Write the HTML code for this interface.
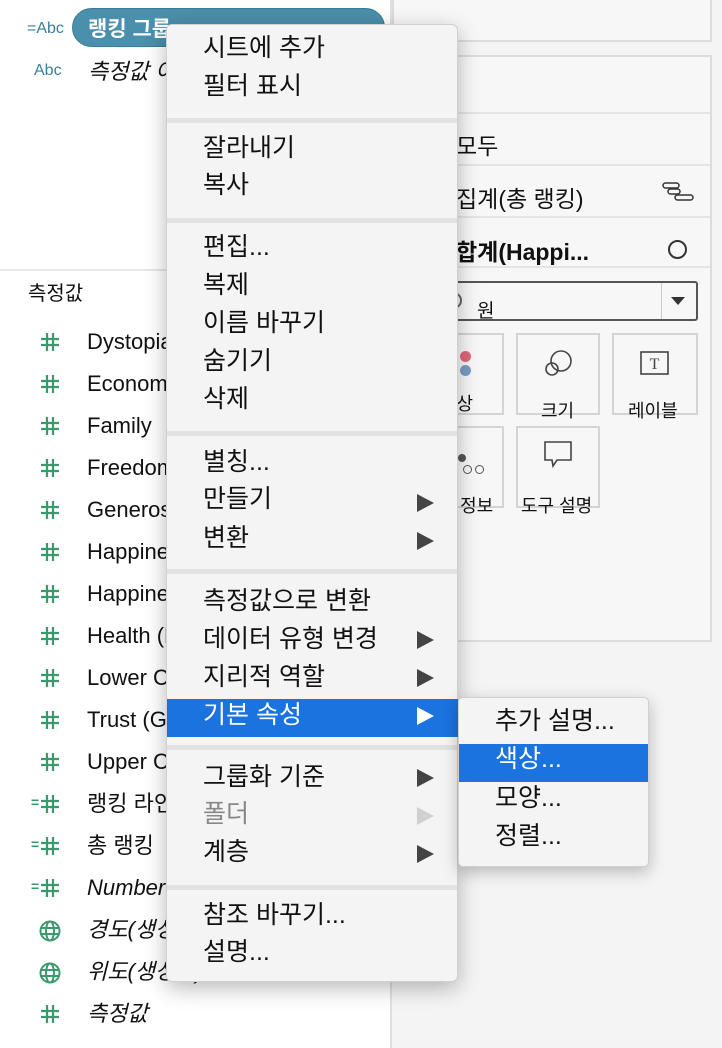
<!DOCTYPE html>
<html><head><meta charset="utf-8"><style>
*{margin:0;padding:0;box-sizing:border-box}
body{width:722px;height:1048px;position:relative;overflow:hidden;background:#fff;font-family:"Liberation Sans","Noto Sans CJK KR",sans-serif;color:#111}
.a{position:absolute;white-space:nowrap}
.li{font-size:22px;line-height:26px}
.it{font-style:italic}
.mi{position:absolute;left:36px;font-size:25px;line-height:28px}
.sep{position:absolute;left:0;right:0;height:5px;background:#e2e2e2}
.arr{position:absolute;left:250px;width:0;height:0;border-top:9px solid transparent;border-bottom:9px solid transparent;border-left:17px solid #444}
.btn{position:absolute;border:2px solid #d4d4d4;background:#f7f7f7;font-size:18px;text-align:center}
.rl{position:absolute;left:394px;width:316px;height:2px;background:#e4e4e4}
.h{position:absolute;width:20px;height:20px}
.eq{position:absolute;font-size:14px;color:#3a9a6e;font-weight:bold}
</style></head><body>
<svg width="0" height="0" style="position:absolute"><defs><symbol id="hs" viewBox="0 0 20 20"><path d="M7 1v18M13 1v18M1 7h18M1 13h18" stroke="#3a9a6e" stroke-width="2.2" fill="none"/></symbol></defs></svg>
<!-- left -->
<div class="a" style="left:27px;top:20px;font-size:16px;color:#3a7f9a">=Abc</div>
<div class="a" style="left:72px;top:8px;width:313px;height:39px;border-radius:20px;background:#4a8fab;border:1px solid #3a7b96"></div>
<div class="a" style="left:88px;top:13px;font-size:21px;color:#fff;font-weight:bold">랭킹 그룹</div>
<div class="a" style="left:34px;top:62px;font-size:16px;color:#3a7f9a">Abc</div>
<div class="a li it" style="left:88px;top:59px">측정값 이름</div>
<div class="a" style="left:0;top:269px;width:390px;height:2px;background:#e6e6e6"></div>
<div class="a li" style="left:28px;top:281px;font-size:20px">측정값</div>
<div class="a" style="left:390px;top:0;width:2px;height:1048px;background:#e0e0e0"></div>
<div class="a" style="left:392px;top:0;width:330px;height:1048px;background:#f4f4f4"></div>

<svg class="h" style="left:40px;top:332px"><use href="#hs"/></svg><div class="a li" style="left:87px;top:329px">Dystopia Residual</div>
<svg class="h" style="left:40px;top:374px"><use href="#hs"/></svg><div class="a li" style="left:87px;top:371px">Economy (GDP per Capi...</div>
<svg class="h" style="left:40px;top:416px"><use href="#hs"/></svg><div class="a li" style="left:87px;top:413px">Family</div>
<svg class="h" style="left:40px;top:458px"><use href="#hs"/></svg><div class="a li" style="left:87px;top:455px">Freedom</div>
<svg class="h" style="left:40px;top:500px"><use href="#hs"/></svg><div class="a li" style="left:87px;top:497px">Generosity</div>
<svg class="h" style="left:40px;top:542px"><use href="#hs"/></svg><div class="a li" style="left:87px;top:539px">Happiness Rank</div>
<svg class="h" style="left:40px;top:584px"><use href="#hs"/></svg><div class="a li" style="left:87px;top:581px">Happiness Score</div>
<svg class="h" style="left:40px;top:626px"><use href="#hs"/></svg><div class="a li" style="left:87px;top:623px">Health (Life Expectancy)</div>
<svg class="h" style="left:40px;top:668px"><use href="#hs"/></svg><div class="a li" style="left:87px;top:665px">Lower Confidence Interval</div>
<svg class="h" style="left:40px;top:710px"><use href="#hs"/></svg><div class="a li" style="left:87px;top:707px">Trust (Government Corr...</div>
<svg class="h" style="left:40px;top:752px"><use href="#hs"/></svg><div class="a li" style="left:87px;top:749px">Upper Confidence Interval</div>
<div class="eq" style="left:31px;top:794px">=</div><svg class="h" style="left:40px;top:794px"><use href="#hs"/></svg><div class="a li" style="left:87px;top:791px">랭킹 라인</div>
<div class="eq" style="left:31px;top:836px">=</div><svg class="h" style="left:40px;top:836px"><use href="#hs"/></svg><div class="a li" style="left:87px;top:833px">총 랭킹</div>
<div class="eq" style="left:31px;top:878px">=</div><svg class="h" style="left:40px;top:878px"><use href="#hs"/></svg><div class="a li it" style="left:87px;top:875px">Number of Records</div>
<svg class="a" style="left:39px;top:920px" width="22" height="22" viewBox="0 0 22 22" fill="none" stroke="#3a9a6e" stroke-width="2"><circle cx="11" cy="11" r="9.5"/><ellipse cx="11" cy="11" rx="4" ry="9.5"/><path d="M1.5 8h19M1.5 14h19"/></svg>
<div class="a li it" style="left:87px;top:917px">경도(생성됨)</div>
<svg class="a" style="left:39px;top:962px" width="22" height="22" viewBox="0 0 22 22" fill="none" stroke="#3a9a6e" stroke-width="2"><circle cx="11" cy="11" r="9.5"/><ellipse cx="11" cy="11" rx="4" ry="9.5"/><path d="M1.5 8h19M1.5 14h19"/></svg>
<div class="a li it" style="left:87px;top:959px">위도(생성됨)</div>
<svg class="h" style="left:40px;top:1004px"><use href="#hs"/></svg><div class="a li it" style="left:87px;top:1001px">측정값</div>

<!-- right panel -->
<div class="a" style="left:392px;top:-2px;width:320px;height:44px;border:2px solid #dcdcdc;background:#f7f7f7"></div>
<div class="a" style="left:392px;top:55px;width:320px;height:587px;border:2px solid #dcdcdc;background:#f7f7f7"></div>
<div class="rl" style="top:112px"></div>
<div class="rl" style="top:164px"></div>
<div class="rl" style="top:216px"></div>
<div class="rl" style="top:266px"></div>
<div class="a" style="left:456px;top:127px;font-size:23px">모두</div>
<div class="a" style="left:456px;top:180px;font-size:23px">집계(총 랭킹)</div>
<svg class="a" style="left:662px;top:182px" width="34" height="20"><rect x="1" y="1" width="16" height="5" rx="2.5" fill="none" stroke="#333" stroke-width="1.5"/><rect x="6" y="7" width="12" height="5" rx="2.5" fill="none" stroke="#333" stroke-width="1.5"/><rect x="13" y="13" width="18" height="5" rx="2.5" fill="none" stroke="#333" stroke-width="1.5"/></svg>
<div class="a" style="left:456px;top:233px;font-size:23px;font-weight:bold">합계(Happi...</div>
<div class="a" style="left:668px;top:240px;width:19px;height:19px;border:2px solid #333;border-radius:50%"></div>
<div class="a" style="left:418px;top:281px;width:280px;height:40px;border:2px solid #555;border-radius:3px;background:#f7f7f7"></div>
<div class="a" style="left:661px;top:283px;width:1px;height:36px;background:#ccc"></div>
<div class="a" style="left:671px;top:297px;border-left:7px solid transparent;border-right:7px solid transparent;border-top:8px solid #333"></div>
<div class="a" style="left:445px;top:292px;width:17px;height:17px;border:2px solid #666;border-radius:50%"></div>
<div class="a" style="left:477px;top:296px;font-size:19px">원</div>
<div class="btn" style="left:418px;top:333px;width:86px;height:82px"><span class="a" style="left:20px;top:55px">색상</span><span class="a" style="left:40px;top:16px;width:11px;height:11px;border-radius:50%;background:#e06777"></span><span class="a" style="left:40px;top:30px;width:11px;height:11px;border-radius:50%;background:#7a9cc2"></span></div>
<div class="btn" style="left:516px;top:333px;width:84px;height:82px"><svg class="a" style="left:25px;top:14px" width="32" height="28" fill="none" stroke="#444" stroke-width="1.6"><circle cx="18" cy="12" r="10"/><circle cx="9" cy="20" r="6"/></svg><span class="a" style="left:23px;top:64px;top:62px">크기</span></div>
<div class="btn" style="left:612px;top:333px;width:86px;height:82px"><svg class="a" style="left:26px;top:16px" width="30" height="26"><rect x="1" y="1" width="27" height="22" fill="none" stroke="#444" stroke-width="1.6"/><text x="14.5" y="18" font-family="Liberation Serif,serif" font-size="16" text-anchor="middle" fill="#444">T</text></svg><span class="a" style="left:14px;top:62px">레이블</span></div>
<div class="btn" style="left:418px;top:426px;width:86px;height:82px"><span class="a" style="left:38px;top:26px;width:8px;height:8px;border-radius:50%;background:#555"></span><span class="a" style="left:43px;top:37px;width:9px;height:9px;border-radius:50%;border:1.5px solid #555"></span><span class="a" style="left:55px;top:37px;width:9px;height:9px;border-radius:50%;border:1.5px solid #555"></span><span class="a" style="left:2px;top:66px;top:64px">세부 정보</span></div>
<div class="btn" style="left:516px;top:426px;width:84px;height:82px"><svg class="a" style="left:25px;top:12px" width="32" height="30" fill="none" stroke="#444" stroke-width="1.6"><path d="M2 2h26v18H14l-4 6-1-6H2z"/></svg><span class="a" style="left:3px;top:64px">도구 설명</span></div>

<!-- menu -->
<div class="a" style="left:166px;top:24px;width:292px;height:958px;background:#f4f4f4;border-radius:6px;border:1px solid #d0d0d0;box-shadow:0 6px 22px rgba(0,0,0,.28)">
<div class="mi" style="top:9px">시트에 추가</div>
<div class="mi" style="top:47px">필터 표시</div>
<div class="sep" style="top:93px"></div>
<div class="mi" style="top:109px">잘라내기</div>
<div class="mi" style="top:146px">복사</div>
<div class="sep" style="top:193px"></div>
<div class="mi" style="top:208px">편집...</div>
<div class="mi" style="top:246px">복제</div>
<div class="mi" style="top:284px">이름 바꾸기</div>
<div class="mi" style="top:322px">숨기기</div>
<div class="mi" style="top:360px">삭제</div>
<div class="sep" style="top:406px"></div>
<div class="mi" style="top:423px">별칭...</div>
<div class="mi" style="top:460px">만들기</div><div class="arr" style="top:469px"></div>
<div class="mi" style="top:499px">변환</div><div class="arr" style="top:507px"></div>
<div class="sep" style="top:544px"></div>
<div class="mi" style="top:562px">측정값으로 변환</div>
<div class="mi" style="top:600px">데이터 유형 변경</div><div class="arr" style="top:606px"></div>
<div class="mi" style="top:638px">지리적 역할</div><div class="arr" style="top:644px"></div>
<div class="a" style="left:0;top:674px;width:291px;height:38px;background:#1a73df"></div>
<div class="mi" style="top:676px;color:#fff">기본 속성</div><div class="arr" style="top:682px;border-left-color:#fff"></div>
<div class="sep" style="top:720px"></div>
<div class="mi" style="top:738px">그룹화 기준</div><div class="arr" style="top:744px"></div>
<div class="mi" style="top:775px;color:#888">폴더</div><div class="arr" style="top:782px;border-left-color:#d0d0d0"></div>
<div class="mi" style="top:813px">계층</div><div class="arr" style="top:820px"></div>
<div class="sep" style="top:860px"></div>
<div class="mi" style="top:876px">참조 바꾸기...</div>
<div class="mi" style="top:913px">설명...</div>
</div>
<!-- submenu -->
<div class="a" style="left:458px;top:697px;width:191px;height:170px;background:#f4f4f4;border-radius:5px;border:1px solid #d0d0d0;box-shadow:0 5px 16px rgba(0,0,0,.25)">
<div class="mi" style="top:9px;left:36px">추가 설명...</div>
<div class="a" style="left:0;top:46px;width:189px;height:38px;background:#1a73df"></div>
<div class="mi" style="top:47px;left:36px;color:#fff">색상...</div>
<div class="mi" style="top:86px;left:36px">모양...</div>
<div class="mi" style="top:124px;left:36px">정렬...</div>
</div>
</body></html>
